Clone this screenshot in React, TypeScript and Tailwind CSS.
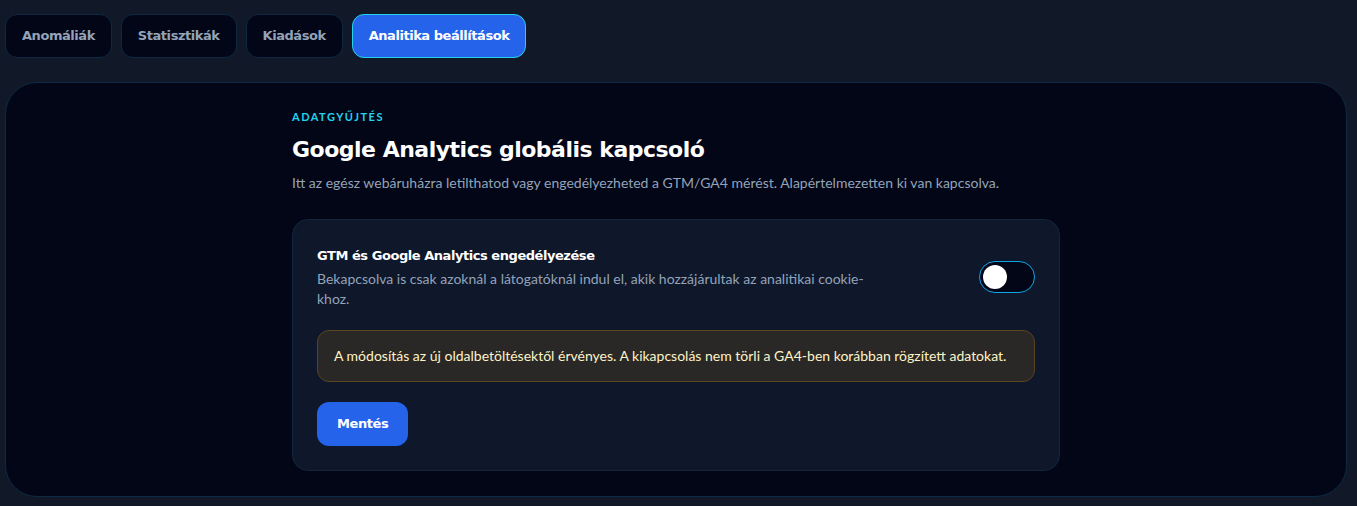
import { useState } from 'react';

const tabs = ['Anomáliák', 'Statisztikák', 'Kiadások', 'Analitika beállítások'];

export default function App() {
  const [active, setActive] = useState(3);
  const [enabled, setEnabled] = useState(false);

  return (
    <div className="min-h-screen bg-[#111827] pl-[5px] pr-[10px] pt-[14px] pb-[10px] font-['Lato',sans-serif]">
      <div className="flex gap-[9px]">
        {tabs.map((t, i) => (
          <button
            key={t}
            onClick={() => setActive(i)}
            className={`h-[44px] rounded-xl border px-4 text-[13px] font-bold tracking-[-0.45px] font-['DejaVu_Sans',sans-serif] ${
              i === active
                ? 'bg-[#2563eb] border-[#22d3ee] text-white'
                : 'bg-[#020617] border-[#0c2a44] text-[#94a3b8]'
            }`}
          >
            {t}
          </button>
        ))}
      </div>

      <div className="mt-[24px] rounded-[32px] border border-[#0c2a44] bg-[#020617] pt-[26px] pb-[25px]">
        <div className="mx-auto max-w-[768px]">
          <div className="text-[11px] font-bold tracking-[1.5px] text-[#22d3ee]">
            ADATGYŰJTÉS
          </div>
          <h1 className="mt-[7px] text-[22px] font-bold tracking-[-0.5px] text-white font-['DejaVu_Sans',sans-serif]">
            Google Analytics globális kapcsoló
          </h1>
          <p className="mt-[7px] text-[14px] leading-5 text-[#94a3b8]">
            Itt az egész webáruházra letilthatod vagy engedélyezheted a GTM/GA4 mérést. Alapértelmezetten ki van kapcsolva.
          </p>

          <div className="mt-[26px] rounded-2xl border border-[#13263d] bg-[#0f172a] px-6 pt-[26px] pb-6">
            <div className="flex items-center justify-between gap-6">
              <div className="max-w-xl">
                <div className="text-[13px] font-bold tracking-[-0.45px] text-white font-['DejaVu_Sans',sans-serif]">
                  GTM és Google Analytics engedélyezése
                </div>
                <p className="mt-[4px] text-[14px] leading-5 text-[#94a3b8]">
                  Bekapcsolva is csak azoknál a látogatóknál indul el, akik hozzájárultak az analitikai cookie-khoz.
                </p>
              </div>
              <button
                onClick={() => setEnabled(!enabled)}
                className={`flex h-[32px] w-[56px] shrink-0 items-center rounded-full border border-[#0ea5e9] px-[3px] ${
                  enabled ? 'bg-[#2563eb] justify-end' : 'bg-[#020617] justify-start'
                }`}
              >
                <span className="h-[24px] w-[24px] rounded-full bg-white" />
              </button>
            </div>

            <div className="mt-[21px] rounded-xl border border-[#5a4520] bg-[#292826] px-4 py-[15px] text-[14px] leading-5 text-[#fef3c7]">
              A módosítás az új oldalbetöltésektől érvényes. A kikapcsolás nem törli a GA4-ben korábban rögzített adatokat.
            </div>

            <button className="mt-[20px] h-[44px] rounded-xl bg-[#2563eb] px-5 text-[13px] font-bold tracking-[-0.4px] text-white font-['DejaVu_Sans',sans-serif]">
              Mentés
            </button>
          </div>
        </div>
      </div>
    </div>
  );
}
